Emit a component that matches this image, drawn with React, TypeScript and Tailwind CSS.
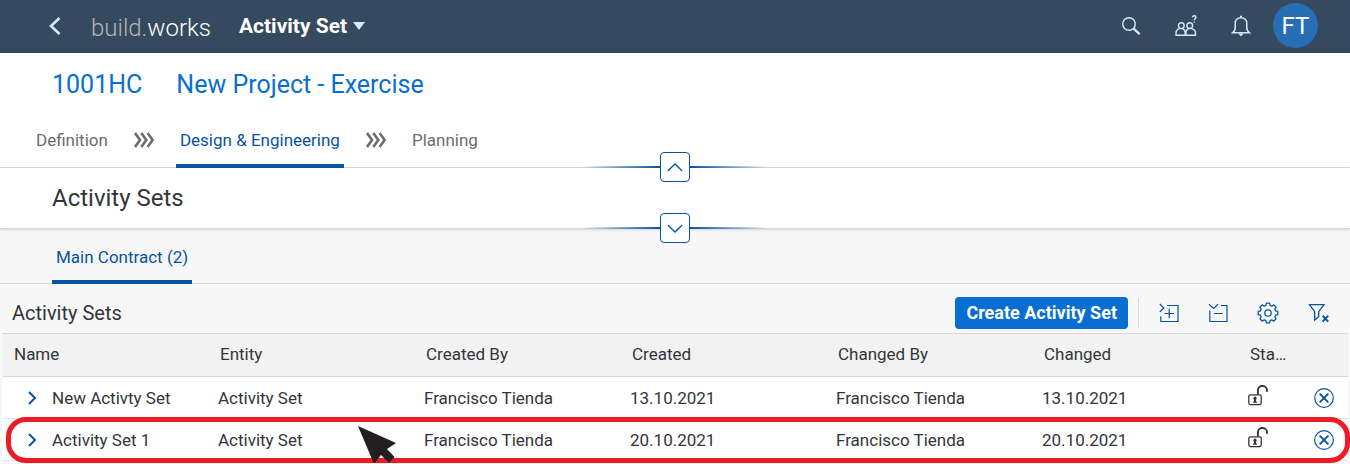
import React from 'react';

type Row = {
  name: string;
  entity: string;
  createdBy: string;
  created: string;
  changedBy: string;
  changed: string;
};

const rows: Row[] = [
  {
    name: 'New Activty Set',
    entity: 'Activity Set',
    createdBy: 'Francisco Tienda',
    created: '13.10.2021',
    changedBy: 'Francisco Tienda',
    changed: '13.10.2021',
  },
  {
    name: 'Activity Set 1',
    entity: 'Activity Set',
    createdBy: 'Francisco Tienda',
    created: '20.10.2021',
    changedBy: 'Francisco Tienda',
    changed: '20.10.2021',
  },
];

const headings = ['Name', 'Entity', 'Created By', 'Created', 'Changed By', 'Changed'];

function SearchIcon() {
  return (
    <svg width="20" height="20" viewBox="0 0 20 20" fill="none" stroke="#d1e8ff">
      <circle cx="8" cy="8" r="6.3" strokeWidth="1.4" />
      <path d="M12.6 12.6l6 5.6" strokeWidth="2.4" />
    </svg>
  );
}

function PeopleIcon() {
  return (
    <svg width="22" height="22" viewBox="0 0 22 22" fill="none" stroke="#d1e8ff" strokeWidth="1.4">
      <circle cx="6.3" cy="10.6" r="2.9" />
      <circle cx="14.7" cy="10.6" r="2.9" />
      <path d="M4.5 13.6C2.4 14.3 1 15.8 1 18v2.2h9.2V18c0-2-1-3.6-2.6-4.3M13.4 13.6c-1.6.7-2.5 2.2-2.5 4.4v2.2h9.6V18c0-2.2-1.7-3.8-4-4.4" />
      <path d="M17.3 2.4c.3-1.1 1-1.6 1.9-1.6 1.1 0 1.8.7 1.8 1.5 0 1.2-1.7 1.4-1.7 3M19.3 6.6v1.2" />
    </svg>
  );
}

function BellIcon() {
  return (
    <svg width="20" height="22" viewBox="0 0 20 22" fill="none" stroke="#d1e8ff" strokeWidth="1.5">
      <path d="M1.5 17.8c2-1.3 2.7-2.9 2.7-5.3V8.3c0-3 2.2-5.6 5.8-5.6s5.8 2.6 5.8 5.6v4.2c0 2.4.7 4 2.7 5.3z" />
      <path d="M10 2.5V.8" strokeWidth="2" />
      <path d="M7.3 18.4h5.4L10 21.4z" fill="#d1e8ff" stroke="none" />
    </svg>
  );
}

function TripleChevron() {
  return (
    <svg width="22" height="16" viewBox="0 0 22 16" fill="none" stroke="#6a6d70" strokeWidth="2.6">
      <path d="M2 1l5 7-5 7M8.3 1l5 7-5 7M14.6 1l5 7-5 7" />
    </svg>
  );
}

function ExpandIcon() {
  return (
    <svg width="20" height="20" viewBox="0 0 20 20" fill="none" stroke="#0854a0" strokeWidth="1.2">
      <path d="M.8 1l4 4-4 4M8 2.5h11v16H1.8v-5M5.5 10.5h9.5M10.2 5.8v9.4" />
    </svg>
  );
}

function CollapseIcon() {
  return (
    <svg width="20" height="20" viewBox="0 0 20 20" fill="none" stroke="#0854a0" strokeWidth="1.2">
      <path d="M1 1.3l4.500 4.200L10 1.300M13 2.500h6v16H1.800V7.500M6 10.500h9" />
    </svg>
  );
}

function GearIcon() {
  return (
    <svg width="22" height="22" viewBox="0 0 22 22" fill="none" stroke="#0854a0" strokeWidth="1.3" strokeLinejoin="round">
      <circle cx="11" cy="11" r="3.2" />
      <path d="M9.4 1.2h3.2l.5 2.2 1.7.7 2-1.2 2.3 2.3-1.2 2 .7 1.7 2.2.5v3.2l-2.2.5-.7 1.7 1.2 2-2.3 2.3-2-1.2-1.7.7-.5 2.2H9.4l-.5-2.2-1.7-.7-2 1.2-2.3-2.3 1.2-2-.7-1.7-2.2-.5V9.4l2.2-.5.7-1.7-1.2-2 2.3-2.3 2 1.2 1.7-.7z" />
    </svg>
  );
}

function ClearFilterIcon() {
  return (
    <svg width="22" height="22" viewBox="0 0 22 22" fill="none" stroke="#0854a0" strokeWidth="1.3">
      <path d="M1.5 2.6H16l-5.3 7v5.2l-4 3.3V9.6z" />
      <path d="M14.6 13.6l5.6 6M20.2 13.6l-5.6 6" strokeWidth="1.9" />
    </svg>
  );
}

function UnlockIcon() {
  return (
    <svg width="20" height="21" viewBox="0 0 20 21" fill="none" stroke="#32363a">
      <rect x=".8" y="9.8" width="12.4" height="9.8" rx="1.5" strokeWidth="1.3" />
      <path d="M9.9 9.5V5.2C9.9 2.6 11.9 1 14.3 1S19 2.6 19 5.2v1.6" strokeWidth="1.9" />
      <circle cx="7" cy="13.2" r="1.6" fill="#32363a" stroke="none" />
      <path d="M6 14h2v2.5h1v1.3H5v-1.3h1z" fill="#32363a" stroke="none" />
    </svg>
  );
}

function CancelIcon() {
  return (
    <svg width="20" height="20" viewBox="0 0 20 20" fill="none" stroke="#0854a0">
      <circle cx="10" cy="10" r="9.3" strokeWidth="1.2" />
      <path d="M5.7 5.7l8.6 8.6M14.3 5.7l-8.6 8.6" strokeWidth="1.9" />
    </svg>
  );
}

function Splitter({ up, label }: { up?: boolean; label: string }) {
  return (
    <div className="absolute bottom-0 left-1/2 z-10 flex h-0 w-[186px] -translate-x-1/2 items-center">
      <span className="h-0.5 flex-1 bg-linear-to-r from-transparent to-[#0854a0]" />
      <button
        aria-label={label}
        className="flex h-[30px] w-[30px] items-center justify-center rounded border border-[#0854a0] bg-white"
      >
        <svg width="16" height="9" viewBox="0 0 16 9" fill="none" stroke="#0854a0" strokeWidth="1.3">
          <path d={up ? 'M.8 8L8 1l7.2 7' : 'M.8 1L8 8l7.2-7'} />
        </svg>
      </button>
      <span className="h-0.5 flex-1 bg-linear-to-l from-transparent to-[#0854a0]" />
    </div>
  );
}

export default function App() {
  return (
    <div className="min-h-screen bg-[#f7f7f7] font-[Roboto,sans-serif] text-[17px] leading-6 text-[#32363a]">
      <header className="flex h-[53px] items-center justify-between bg-[#354a5f] pr-8 pb-0.5 pl-[47px] text-white">
        <div className="flex items-center">
          <button aria-label="Back" className="mr-7 flex w-4 justify-center">
            <svg width="12" height="18" viewBox="0 0 12 18" fill="none" stroke="#d1e8ff" strokeWidth="2.6">
              <path d="M10.5 1L2 9l8.500 8" />
            </svg>
          </button>
          <div className="mr-7 pt-1 text-2xl font-light">
            <span className="text-[#b5b5b5]">build.</span>works
          </div>
          <button className="flex items-center gap-1.5 text-[21px] font-bold">
            Activity Set
            <svg width="12" height="8" viewBox="0 0 12 8">
              <path d="M0 0h12L6 8z" fill="#d1e8ff" />
            </svg>
          </button>
        </div>
        <div className="flex items-center gap-[34px]">
          <button aria-label="Search"><SearchIcon /></button>
          <button aria-label="Contacts"><PeopleIcon /></button>
          <button aria-label="Notifications"><BellIcon /></button>
          <button className="-ml-3 h-[45px] w-[45px] rounded-full bg-[#286eb4] text-2xl">FT</button>
        </div>
      </header>

      <section className="relative border-b border-[#d9d9d9] bg-white shadow-sm">
        <h1 className="flex gap-[34px] px-[52px] pt-4 text-[25px] leading-8 text-[#0a6ed1]">
          <span>1001HC</span>
          <span>New Project - Exercise</span>
        </h1>
        <nav className="flex gap-[21px] px-8 pt-[27px] text-[#6a6d70]">
          <a href="#definition" className="px-1 pb-[15px]">Definition</a>
          <span className="pt-1"><TripleChevron /></span>
          <a href="#design" className="-mb-px rounded-t-sm px-1 text-[#0854a0] shadow-[inset_0_-4px_0_#0854a0]">
            Design &amp; Engineering
          </a>
          <span className="pt-1"><TripleChevron /></span>
          <a href="#planning" className="px-1">Planning</a>
        </nav>
        <Splitter up label="Collapse header" />
      </section>

      <section className="relative border-b border-[#d9d9d9] bg-white px-[52px] py-[14px] shadow-sm">
        <h2 className="text-2xl leading-8">Activity Sets</h2>
        <Splitter label="Expand header" />
      </section>

      <nav className="flex border-b border-[#d9d9d9] px-[52px] pt-4">
        <a href="#main" className="-mb-px rounded-t-sm border-b-4 border-[#0854a0] px-1 pb-[11px] text-[#0854a0]">
          Main Contract (2)
        </a>
      </nav>

      <div className="flex h-[49px] items-center justify-between pt-2 pr-5 pl-3">
        <h3 className="text-xl leading-6">Activity Sets</h3>
        <div className="flex items-center">
          <button className="rounded bg-[#0a6ed1] px-[11px] py-1 text-lg leading-6 font-bold text-white">
            Create Activity Set
          </button>
          <span className="mr-5 ml-2.5 h-[30px] w-px bg-[#d9d9d9]" />
          <div className="flex items-center gap-[29px]">
            <button aria-label="Expand all"><ExpandIcon /></button>
            <button aria-label="Collapse all"><CollapseIcon /></button>
            <button aria-label="Settings"><GearIcon /></button>
            <button aria-label="Clear filters"><ClearFilterIcon /></button>
          </div>
        </div>
      </div>

      <div className="relative px-0.5 pb-0.5">
        <table className="w-full table-fixed border-collapse bg-white text-left">
          <thead>
            <tr className="h-[43px] border-y border-[#d9d9d9] bg-[#f2f2f2]">
              {headings.map((heading) => (
                <th key={heading} className="px-3 pb-0.5 font-normal">{heading}</th>
              ))}
              <th className="w-[62px] truncate pr-2 pb-0.5 pl-3 font-normal" title="Status">Sta…</th>
              <th className="w-12" aria-label="Actions" />
            </tr>
          </thead>
          <tbody>
            {rows.map((row) => (
              <tr key={row.name} className="h-[42px] border-b border-[#e5e5e5]">
                <td className="px-2.5">
                  <div className="flex items-center">
                    <button aria-label={`Expand ${row.name}`} className="flex w-10 justify-center">
                      <svg width="9" height="14" viewBox="0 0 9 14" fill="none" stroke="#0854a0" strokeWidth="2">
                        <path d="M1 1l6 6-6 6" />
                      </svg>
                    </button>
                    {row.name}
                  </div>
                </td>
                <td className="px-2.5">{row.entity}</td>
                <td className="px-2.5">{row.createdBy}</td>
                <td className="px-2.5">{row.created}</td>
                <td className="px-2.5">{row.changedBy}</td>
                <td className="px-2.5">{row.changed}</td>
                <td className="px-2.5 pb-1"><UnlockIcon /></td>
                <td>
                  <button aria-label={`Remove ${row.name}`} className="mx-auto block"><CancelIcon /></button>
                </td>
              </tr>
            ))}
          </tbody>
        </table>

        {/* highlight around the last row, with the pointer on top */}
        <div className="pointer-events-none absolute right-0 bottom-0 left-1.5 h-[46px] rounded-[20px] border-[5px] border-[#ed1c24]" />
        <svg className="pointer-events-none absolute bottom-0 left-[358px]" width="38" height="37" viewBox="0 0 38 37">
          <path d="M0 0l38 17-9 6 7.5 8-5.500 6-8-8-7 9z" fill="#231f20" />
        </svg>
      </div>
    </div>
  );
}
